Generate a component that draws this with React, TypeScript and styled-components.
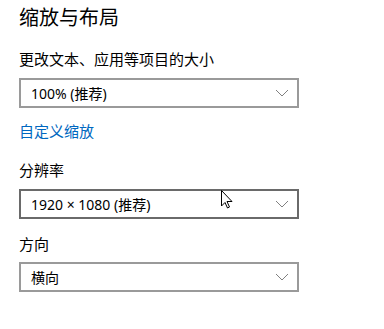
import React from "react";
import styled, { createGlobalStyle } from "styled-components";

const Global = createGlobalStyle`
  html, body { margin: 0; padding: 0; background: #fff; }
  body { font-family: "Noto Sans", "Noto Sans CJK SC", sans-serif; color: #000; }
`;

const Page = styled.div`
  position: relative;
  width: 384px;
  height: 329px;
  padding: 3px 0 0 19px;
  box-sizing: border-box;
  display: flex;
  flex-direction: column;
  overflow: hidden;
`;

const Title = styled.div`
  font-family: "Noto Sans CJK SC", sans-serif;
  font-size: 20px;
  line-height: 28px;
  color: #000;
`;

const Label = styled.div<{ $gap: number }>`
  font-family: "Noto Sans CJK SC", sans-serif;
  font-size: 15px;
  line-height: 22px;
  margin-top: ${(p) => p.$gap}px;
  color: #000;
`;

const Link = styled.a`
  font-family: "Noto Sans CJK SC", sans-serif;
  font-size: 15px;
  line-height: 22px;
  margin-top: 12px;
  color: #0067c0;
  text-decoration: none;
  align-self: flex-start;
`;

const Select = styled.div<{ $hover?: boolean; $gap: number }>`
  margin-top: ${(p) => p.$gap}px;
  width: 280px;
  height: 30px;
  box-sizing: border-box;
  border: 2px solid ${(p) => (p.$hover ? "#6a6a6a" : "#9a9a9a")};
  display: flex;
  align-items: center;
  justify-content: space-between;
  padding: 0 8px 0 10px;
  font-family: "Noto Sans", "Noto Sans CJK SC", sans-serif;
  font-size: 14px;
  color: #000;
`;

const Chevron = styled.svg`
  width: 14px;
  height: 8px;
  flex: none;
`;

const Cursor = styled.svg`
  position: absolute;
  left: 221px;
  top: 190px;
  width: 12px;
  height: 19px;
`;

const Arrow = () => (
  <Chevron viewBox="0 0 14 8">
    <polyline points="1,1 7,7 13,1" fill="none" stroke="#808080" strokeWidth="1" />
  </Chevron>
);

export default function App() {
  return (
    <>
      <Global />
      <Page>
        <Title>缩放与布局</Title>
        <Label $gap={17}>更改文本、应用等项目的大小</Label>
        <Select $gap={8}>
          <span>100% (推荐)</span>
          <Arrow />
        </Select>
        <Link href="#">自定义缩放</Link>
        <Label $gap={17}>分辨率</Label>
        <Select $gap={8} $hover>
          <span>1920 × 1080 (推荐)</span>
          <Arrow />
        </Select>
        <Label $gap={14}>方向</Label>
        <Select $gap={7}>
          <span>横向</span>
          <Arrow />
        </Select>
        <Cursor viewBox="0 0 12 19">
          <path
            d="M0.5,0.5 L0.5,16 L4,12.5 L6.5,18 L8.5,17 L6,11.5 L11,11.5 Z"
            fill="#fff"
            stroke="#000"
            strokeWidth="1"
            strokeLinejoin="miter"
          />
        </Cursor>
      </Page>
    </>
  );
}
